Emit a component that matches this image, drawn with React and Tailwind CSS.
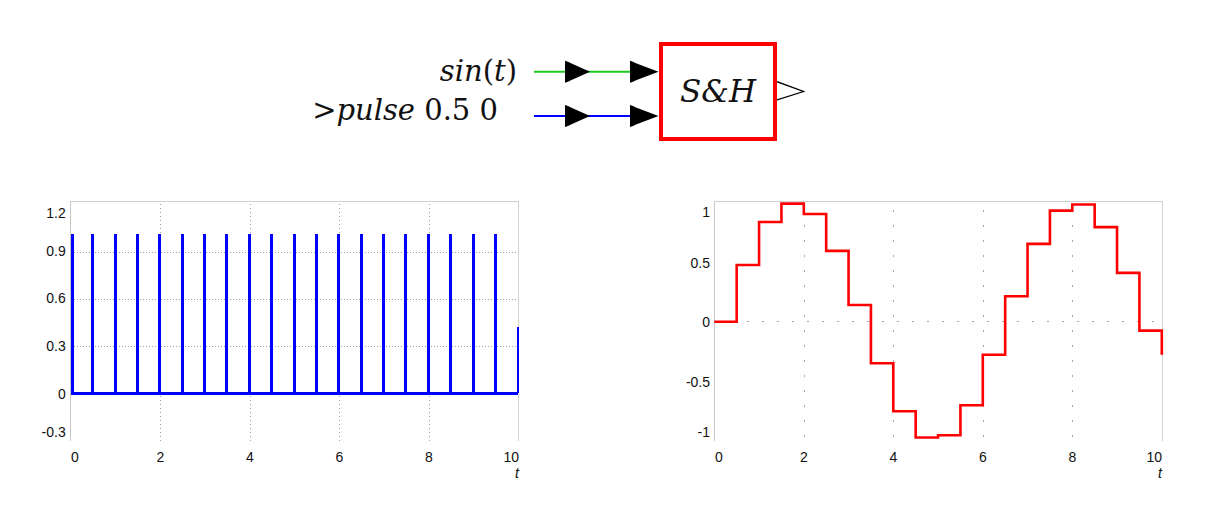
import React from "react";

const LX = (t) => 70.8 + t * 44.75;
const LY = (v) => 203.5 - v * 157.7;
const RX = (t) => 103.3 + t * 44.75;
const RY = (v) => 131.7 - v * 118.4;

function Arrow({ x, y, w }) {
  const b = x + 6;
  const tip = x + w;
  return (
    <polygon
      points={`${x},${y - 11} ${x + 3},${y - 10} ${b},${y - 8.5} ${tip},${y} ${b},${y + 8.5} ${x + 3},${y + 10} ${x},${y + 11}`}
      fill="#000"
    />
  );
}

function Diagram() {
  return (
    <div className="flex h-[190px] items-start pl-[300px] pt-[42px]">
      <div className="flex w-[217px] flex-col items-end pt-[10px] font-['DejaVu_Serif',serif] text-[29px] leading-[39px] text-[#111]">
        <div>
          <i>sin</i>(<i>t</i>)
        </div>
        <div className="pr-[19px]">
          <i>&gt;pulse</i> 0.5 0
        </div>
      </div>
      <svg width="142" height="99" className="block shrink-0">
        <line x1="17" y1="29.7" x2="136" y2="29.7" stroke="#1ec81e" strokeWidth="2" />
        <line x1="17" y1="74" x2="136" y2="74" stroke="#0000ff" strokeWidth="2" />
        <Arrow x={48} y={29.7} w={25} />
        <Arrow x={113} y={29.7} w={28.5} />
        <Arrow x={48} y={74} w={25} />
        <Arrow x={113} y={74} w={28.5} />
      </svg>
      <div className="flex h-[99px] w-[118px] shrink-0 items-center justify-center border-4 border-[#ff0000] font-['DejaVu_Serif',serif] text-[31px] italic text-[#111]">
        S&amp;H
      </div>
      <svg width="30" height="99" className="block shrink-0">
        <polyline points="0,39.7 26.5,49.5 0,58" fill="none" stroke="#000" strokeWidth="1.3" />
      </svg>
    </div>
  );
}

function PulseChart() {
  const spikes = [];
  for (let k = 0; k < 20; k++) {
    const x = LX(k * 0.5);
    const x0 = k === 0 ? 71 : Math.round(x - 2);
    spikes.push(
      <rect
        key={k}
        x={x0}
        y={Math.round(LY(1.01))}
        width={3}
        height={Math.round(LY(0) - LY(1.01))}
        fill="#0000ff"
        shapeRendering="crispEdges"
      />
    );
  }
  const yTicks = [
    ["1.2", 23],
    ["0.9", 61.3],
    ["0.6", 108.3],
    ["0.3", 156],
    ["0", 203.5],
    ["-0.3", 241.7],
  ];
  return (
    <svg width="611" height="300" className="block shrink-0 font-['Liberation_Sans',Arial,sans-serif]">
      {[0.3, 0.6, 0.9].map((v) => (
        <line
          key={v}
          x1={71}
          x2={518}
          y1={Math.round(LY(v)) + 0.5}
          y2={Math.round(LY(v)) + 0.5}
          stroke="#a0a0a0"
          strokeWidth="1"
          strokeDasharray="1 2"
          shapeRendering="crispEdges"
        />
      ))}
      {[2, 4, 6, 8].map((t) => (
        <line
          key={t}
          x1={Math.round(LX(t)) + 0.5}
          x2={Math.round(LX(t)) + 0.5}
          y1={14}
          y2={251}
          stroke="#a0a0a0"
          strokeWidth="1"
          strokeDasharray="1 3"
          shapeRendering="crispEdges"
        />
      ))}
      <line x1="70.5" y1="11.5" x2="519" y2="11.5" stroke="#d0d0d0" shapeRendering="crispEdges" />
      <line x1="70.5" y1="11" x2="70.5" y2="251" stroke="#c8c8c8" shapeRendering="crispEdges" />
      <line x1="518.8" y1="11" x2="518.8" y2="251" stroke="#d0d0d0" shapeRendering="crispEdges" />
      {spikes}
      <rect x={71} y={202} width={447} height={3} fill="#0000ff" shapeRendering="crispEdges" />
      <rect x={517} y={Math.round(LY(0.42))} width={1.5} height={Math.round(LY(0) - LY(0.42))} fill="#0000ff" shapeRendering="crispEdges" />
      {yTicks.map(([l, c]) => (
        <text key={l} x="65.7" y={c + 5} textAnchor="end" fontSize="14" fill="#111">
          {l}
        </text>
      ))}
      {[0, 2, 4, 6, 8, 10].map((t) => (
        <text
          key={t}
          x={t === 0 ? 71 : t === 10 ? 519 : LX(t)}
          y="271.8"
          textAnchor={t === 0 ? "start" : t === 10 ? "end" : "middle"}
          fontSize="14"
          fill="#111"
        >
          {t}
        </text>
      ))}
      <text x="519" y="287.5" textAnchor="end" fontSize="14" fontStyle="italic" fill="#111">
        t
      </text>
    </svg>
  );
}

function HoldChart() {
  let d = `M ${RX(0)} ${RY(0)}`;
  for (let k = 1; k < 20; k++) {
    d += ` H ${RX(k * 0.5)} V ${RY(Math.sin(k * 0.5))}`;
  }
  d += ` H ${RX(10)} V ${RY(-0.28)}`;
  const yTicks = [
    ["1", 21.7],
    ["0.5", 72.7],
    ["0", 131.7],
    ["-0.5", 192.3],
    ["-1", 242],
  ];
  return (
    <svg width="611" height="300" className="block shrink-0 font-['Liberation_Sans',Arial,sans-serif]">
      <line
        x1={106}
        x2={551}
        y1={131.5}
        y2={131.5}
        stroke="#a8a8a8"
        strokeWidth="1"
        strokeDasharray="1.5 13.5"
        shapeRendering="crispEdges"
      />
      {[2, 4, 6, 8].map((t) => (
        <line
          key={t}
          x1={Math.round(RX(t)) + 0.5}
          x2={Math.round(RX(t)) + 0.5}
          y1={20}
          y2={251}
          stroke="#a8a8a8"
          strokeWidth="1"
          strokeDasharray="1.5 13.5"
          shapeRendering="crispEdges"
        />
      ))}
      <line x1="103.3" y1="11.5" x2="551.8" y2="11.5" stroke="#d0d0d0" shapeRendering="crispEdges" />
      <line x1="103.5" y1="11" x2="103.5" y2="251" stroke="#c8c8c8" shapeRendering="crispEdges" />
      <line x1="551.5" y1="11" x2="551.5" y2="251" stroke="#d0d0d0" shapeRendering="crispEdges" />
      <path d={d} fill="none" stroke="#ff0000" strokeWidth="2.6" strokeLinejoin="miter" />
      {yTicks.map(([l, c]) => (
        <text key={l} x="99" y={c + 5} textAnchor="end" fontSize="14" fill="#111">
          {l}
        </text>
      ))}
      {[0, 2, 4, 6, 8, 10].map((t) => (
        <text
          key={t}
          x={t === 0 ? 104 : t === 10 ? 551 : RX(t)}
          y="271.8"
          textAnchor={t === 0 ? "start" : t === 10 ? "end" : "middle"}
          fontSize="14"
          fill="#111"
        >
          {t}
        </text>
      ))}
      <text x="551" y="287.5" textAnchor="end" fontSize="14" fontStyle="italic" fill="#111">
        t
      </text>
    </svg>
  );
}

export default function App() {
  return (
    <div className="flex h-[512px] w-[1222px] flex-col overflow-hidden bg-white">
      <Diagram />
      <div className="flex">
        <PulseChart />
        <HoldChart />
      </div>
    </div>
  );
}
